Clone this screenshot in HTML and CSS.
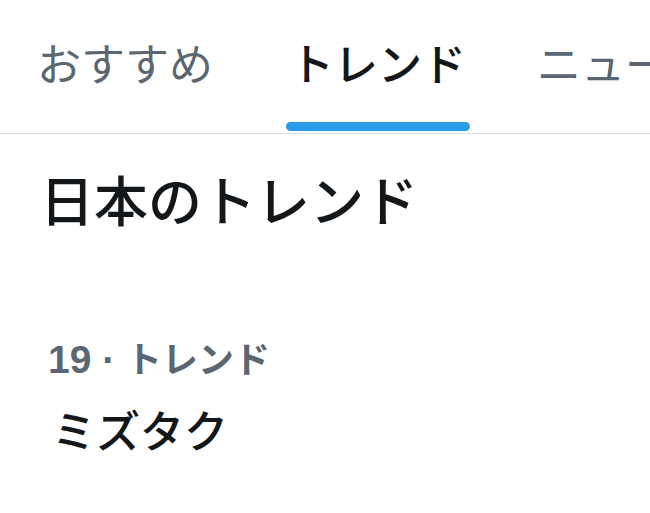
FILE: index.html
```html
<!DOCTYPE html>
<html lang="ja">
<head>
<meta charset="utf-8">
<link rel="stylesheet" href="styles.css">
</head>
<body>
<nav class="tabs">
  <div class="tab">おすすめ</div>
  <div class="tab active">トレンド</div>
  <div class="tab">ニュース</div>
</nav>
<h1 class="title">日本のトレンド</h1>
<div class="trend">
  <div class="meta"><span class="rank">19 · </span>トレンド</div>
  <div class="name">ミズタク</div>
</div>
</body>
</html>
```
FILE: styles.css
```css
html, body { margin: 0; padding: 0; background: #fff; }
body {
  font-family: "Noto Sans CJK JP", "Noto Sans", sans-serif;
  width: 650px; height: 513px; overflow: hidden;
}
.tabs {
  display: flex;
  border-bottom: 1px solid #d8dee2;
  height: 133px;
  white-space: nowrap;
  padding-left: 37px;
  gap: 77px;
}
.tab {
  position: relative;
  font-size: 44px;
  color: #5b6670;
  padding-top: 36px;
  line-height: 52px;
}
.tab:last-child { margin-left: -6px; }
.tab.active { color: #14171a; font-weight: 500; }
.tab.active::after {
  content: "";
  position: absolute;
  left: -4px; right: -4px;
  top: 122px;
  height: 9px;
  border-radius: 5px;
  background: #2a9be6;
}
.title {
  margin: 0;
  padding: 33px 0 0 40px;
  font-size: 54px;
  font-weight: 500;
  color: #14171a;
  line-height: 64px;
}
.trend { padding: 104px 0 0 48px; }
.meta {
  font-size: 36px; font-weight: 700; color: #5b6670; line-height: 44px;
}
.rank {
  font-family: "Liberation Sans", Arial, sans-serif;
  font-size: 39px;
  white-space: pre;
}
.name {
  font-size: 44px; font-weight: 500; color: #14171a; line-height: 56px;
  margin-top: 19px; padding-left: 4px;
}
```
